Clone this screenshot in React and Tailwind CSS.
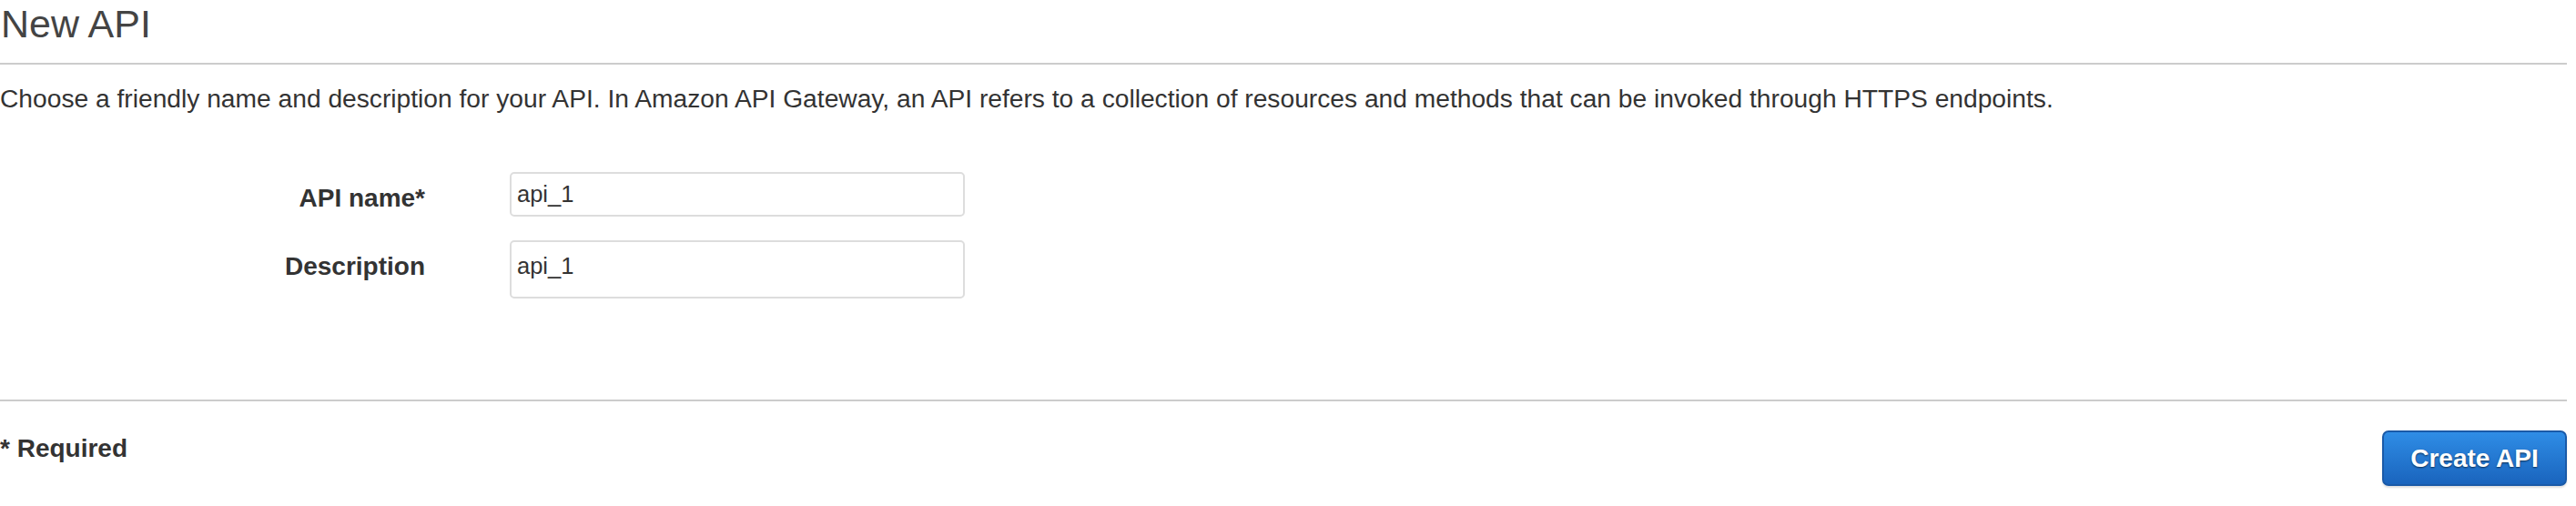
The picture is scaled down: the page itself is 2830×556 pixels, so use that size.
import React from "react";

export default function App() {
  return (
    <div
      className="w-[2820px] bg-white text-[#333]"
      style={{ fontFamily: '"Liberation Sans", Arial, Helvetica, sans-serif' }}
    >
      <h1 className="text-[43px] leading-[52px] font-normal text-[#444] mb-[17px] pl-[1px]">
        New API
      </h1>
      <div className="h-[2px] bg-[#cccccc]" />
      <p className="mt-[21px] text-[28.2px] leading-[32px] text-[#333]">
        Choose a friendly name and description for your API. In Amazon API Gateway, an API refers to a collection of resources and methods that can be invoked through HTTPS endpoints.
      </p>

      <div className="mt-[65px] grid grid-cols-[467px_500px] gap-x-[93px] gap-y-[26px]">
        <label className="pt-[13px] text-right text-[28px] leading-[32px] font-bold text-[#333]">
          API name*
        </label>
        <input
          readOnly
          defaultValue="api_1"
          className="h-[49px] w-[500px] rounded-[5px] border-2 border-[#dddddd] bg-white px-[6px] text-[25.5px] text-[#333] outline-none"
        />
        <label className="pt-[13px] text-right text-[28px] leading-[32px] font-bold text-[#333]">
          Description
        </label>
        <textarea
          readOnly
          defaultValue="api_1"
          className="h-[64px] w-[500px] resize-none rounded-[5px] border-2 border-[#dddddd] bg-white px-[6px] pt-[11px] text-[25.5px] leading-[30px] text-[#333] outline-none overflow-hidden"
        />
      </div>

      <div className="mt-[111px] h-[2px] bg-[#cccccc]" />
      <div className="flex items-start justify-between pt-[32px] pb-[22px]">
        <div className="mt-[4px] text-[28px] leading-[32px] font-bold text-[#333]">
          * Required
        </div>
        <button className="h-[61px] w-[203px] rounded-[7px] border-2 border-[#1a5aa8] bg-gradient-to-b from-[#2f8de6] to-[#1a64bd] text-[28px] font-bold text-white shadow-[0_2px_2px_rgba(0,0,0,0.12)] [text-shadow:0_1px_2px_rgba(0,0,0,0.6)]">
          Create API
        </button>
      </div>
    </div>
  );
}
